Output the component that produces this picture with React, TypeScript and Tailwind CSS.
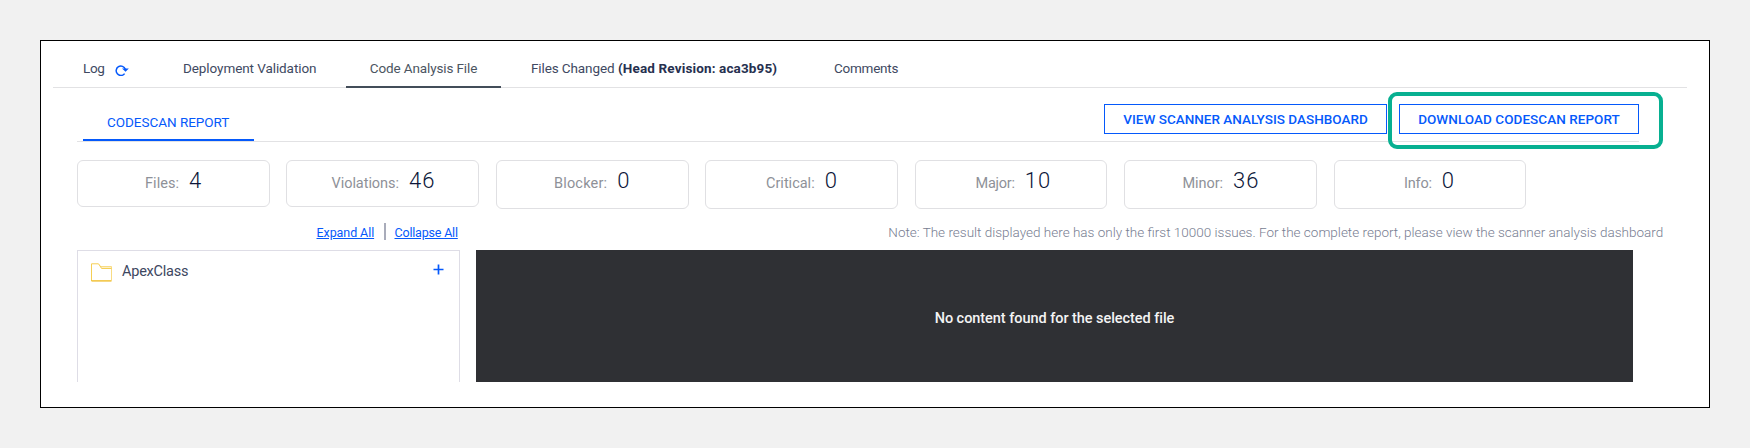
const stats = [
  { label: "Files:", value: "4", box: "h-[47px] w-[193px]", pad: "pl-[67px]", track: "tracking-[0.05px]" },
  { label: "Violations:", value: "46", box: "ml-4 h-[47px] w-[193px]", pad: "pl-[44.5px]", track: "tracking-[-0.05px]" },
  { label: "Blocker:", value: "0", box: "ml-[17px] h-[49px] w-[193px]", pad: "pl-[57px]", track: "tracking-[0.18px]" },
  { label: "Critical:", value: "0", box: "ml-4 h-[49px] w-[193px]", pad: "pl-[60px]", track: "tracking-[0px]" },
  { label: "Major:", value: "10", box: "ml-[17px] h-[49px] w-[192px]", pad: "pl-[59.5px]", track: "tracking-[-0.24px]" },
  { label: "Minor:", value: "36", box: "ml-[17px] h-[49px] w-[193px]", pad: "pl-[57.5px]", track: "tracking-[-0.08px]" },
  { label: "Info:", value: "0", box: "ml-[17px] h-[49px] w-[192px]", pad: "pl-[69px]", track: "tracking-[-0.2px]" },
];

function RefreshIcon() {
  return (
    <svg width="14" height="12" viewBox="0 0 14 12" fill="none" className="ml-2.5 mt-[15px] shrink-0">
      <path d="M9.6 9.6A4.7 4.7 0 1 1 10.3 5.2" stroke="#0559fb" strokeWidth="1.5" />
      <path d="M7 4.6h6.8l-3.2 3.2z" fill="#0559fb" />
    </svg>
  );
}

function FolderIcon() {
  return (
    <svg width="21" height="19" viewBox="0 0 21 19" fill="none" className="shrink-0">
      <path d="M7.5 1h0.5l2.5 2.5h10v2.5H10.5z" fill="#fdf0c8" />
      <path d="M9 3.5h11.5v14" stroke="#f8dc84" />
      <path d="M0.5 18V0.8h7l3.2 4.7h9.8" stroke="#f5cf55" />
      <path d="M0.5 17.9h20" stroke="#efb91c" strokeWidth="1.3" />
    </svg>
  );
}

export default function App() {
  return (
    <div className="h-[448px] w-[1750px] overflow-hidden bg-[#f1f1f1] p-10 font-['Roboto',sans-serif] text-[#1d2749]">
      <div className="relative flex h-[368px] w-[1670px] flex-col border border-black bg-white">
        <nav className="ml-3 mt-2 flex h-[39px] w-[1634px] shrink-0 whitespace-nowrap text-[13.5px] leading-[39px] text-[#404962]">
          <div className="flex w-[293px] border-b border-[#e2e2e4] pl-[30px]">
            <div className="flex w-[100px]">
              <span className="tracking-[-0.3px]">Log</span>
              <RefreshIcon />
            </div>
            <span className="tracking-[-0.08px]">Deployment Validation</span>
          </div>
          <div className="w-[155px] border-b-2 border-[#434d59] text-center tracking-[-0.12px] text-[#4b5561]">
            Code Analysis File
          </div>
          <div className="flex flex-1 border-b border-[#e2e2e4] pl-[30px]">
            <span className="w-[87px] tracking-[-0.11px]">Files Changed</span>
            <span className="w-[216px] font-bold tracking-[0.14px] text-[#26304f]">(Head Revision: aca3b95)</span>
            <span className="tracking-[-0.24px]">Comments</span>
          </div>
        </nav>

        <div className="ml-9 flex h-[54px] w-[1562px] shrink-0 justify-between whitespace-nowrap border-b border-[#e2e2e4] pl-1.5 text-[13.5px] text-[#0559fb]">
          <div className="mt-4 h-[37px] w-[171px] border-b-2 border-[#0559fb] pl-6 leading-[36px] tracking-[-0.03px]">
            CODESCAN REPORT
          </div>
          <div className="mt-4 flex gap-3 font-medium leading-[28px]">
            <button className="h-[30px] w-[283px] border border-[#0559fb] text-center leading-[28px] tracking-[0.01px]">
              VIEW SCANNER ANALYSIS DASHBOARD
            </button>
            <button className="h-[30px] w-[240px] border border-[#0559fb] text-center leading-[28px] tracking-[0.05px]">
              DOWNLOAD CODESCAN REPORT
            </button>
          </div>
        </div>
        <div className="absolute left-[1347px] top-[51px] h-[57px] w-[275px] rounded-[9px] border-4 border-[#07b091]" />

        <div className="ml-9 mt-[18px] flex h-[49px] shrink-0 items-start">
          {stats.map((s) => (
            <div key={s.label} className={`${s.box} ${s.pad} flex items-baseline gap-2.5 whitespace-nowrap rounded-md border border-[#e0e0e3] leading-[39px]`}>
              <span className={`${s.track} text-[14.5px] text-[#8e9198]`}>{s.label}</span>
              <span className="text-[22px] font-light tracking-[1px] text-[#0c1639]">{s.value}</span>
            </div>
          ))}
        </div>

        <div className="ml-9 flex h-[41px] shrink-0 whitespace-nowrap">
          <div className="flex pl-[239.5px] text-[12.5px] leading-[47px] text-[#0559fb]">
            <span className="w-[67.5px] tracking-[-0.08px] underline underline-offset-[1px]">Expand All</span>
            <span className="mt-3.5 h-[17px] w-0.5 bg-[#a9acba]" />
            <span className="ml-[8.5px] tracking-[-0.19px] underline underline-offset-[1px]">Collapse All</span>
          </div>
          <p className="ml-[430.5px] text-[13.5px] font-light leading-[47px] text-[#777d91]">
            Note: The result displayed here has only the first 10000 issues. For the complete report, please view the
            scanner analysis dashboard
          </p>
        </div>

        <div className="ml-9 flex h-[132px] shrink-0 gap-4">
          <div className="flex w-[383px] items-start border border-b-0 border-[#dedde6] pl-[13px] pt-3">
            <FolderIcon />
            <span className="ml-2.5 text-[14.5px] leading-[17px] tracking-[-0.23px] text-[#3d475f]">ApexClass</span>
            <svg width="11" height="11" viewBox="0 0 11 11" className="ml-auto mr-[15px] mt-px">
              <path d="M5.5 0.5v10M0.5 5.5h10" stroke="#0559fb" strokeWidth="1.7" />
            </svg>
          </div>
          <div className="w-[1157px] bg-[#2f3034] pt-[59px] text-center text-[14.5px] font-medium leading-5 tracking-[-0.05px] text-[#f4f4f4]">
            No content found for the selected file
          </div>
        </div>
      </div>
    </div>
  );
}
